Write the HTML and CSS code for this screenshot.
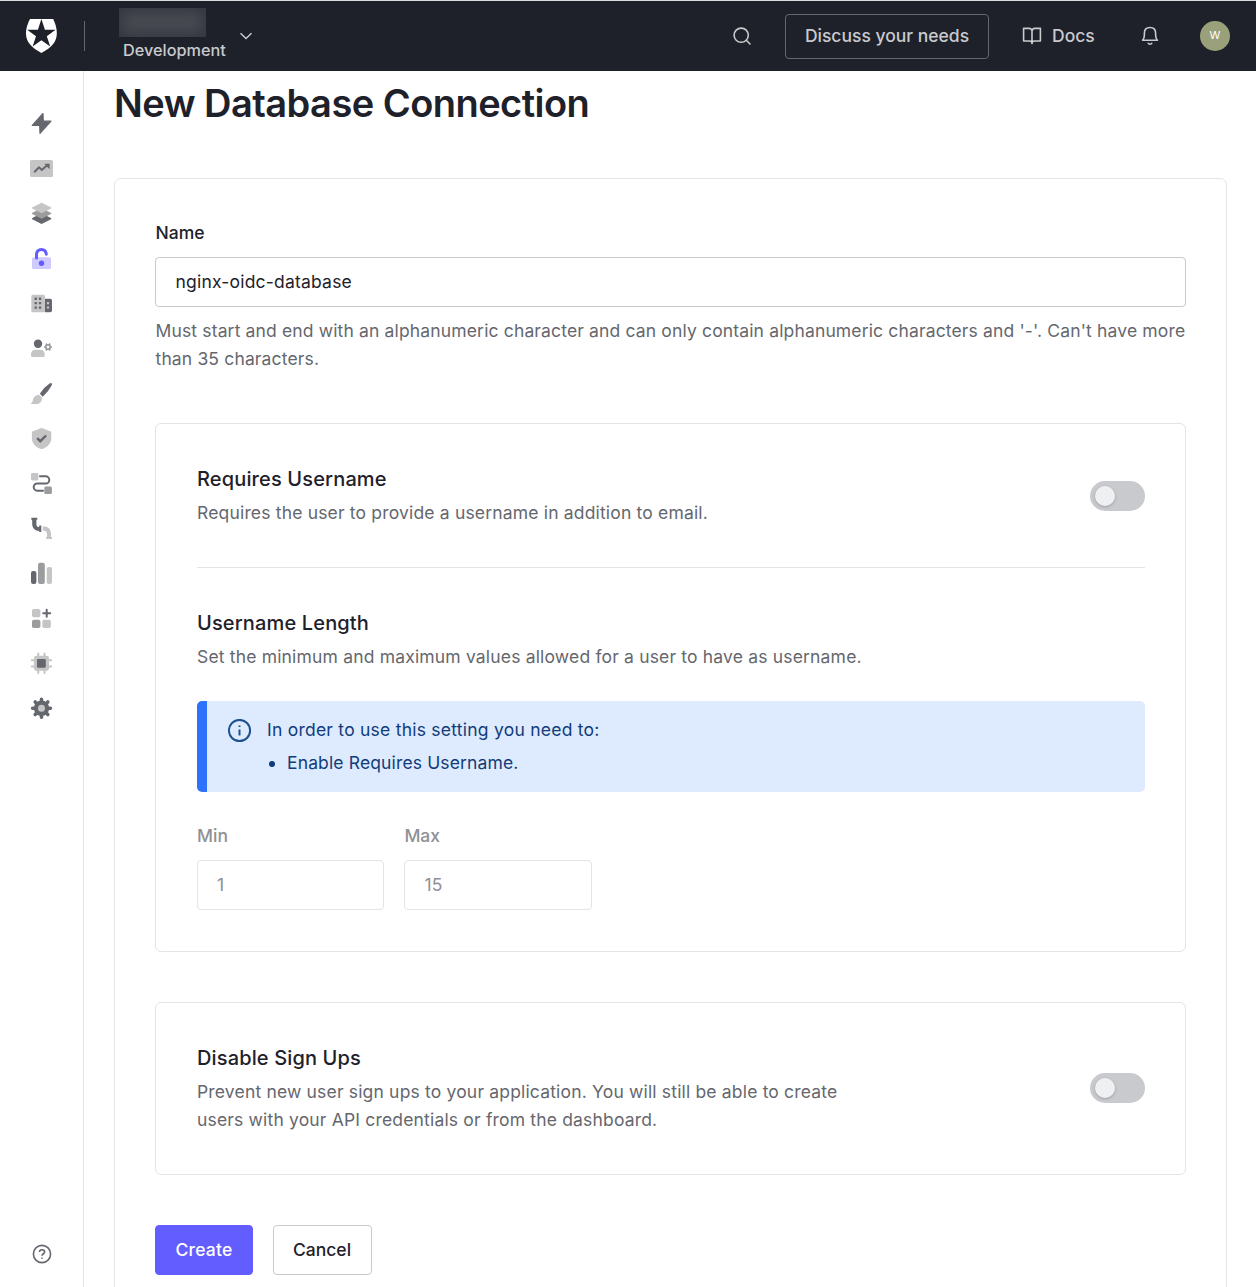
FILE: index.html
```html
<!DOCTYPE html>
<html lang="en">
<head>
<meta charset="utf-8">
<title>New Database Connection</title>
<link rel="stylesheet" href="styles.css">
</head>
<body>
<header class="topbar">
  <svg class="logo" viewBox="0 0 31 34"><path fill="#fff" d="M4 0H27.2C29.5 5 31 10 30.8 15C30.4 23 26 28.2 15.4 34C4.8 28.2.4 23 0 15C-.2 10 1.4 5 4 0Z"/><path fill="#1e212a" d="M15.4 0L18.9 10.7H29.6L20.8 17.2L24.2 27.6L15.4 21.2L6.6 27.6L10 17.2L1.2 10.7H11.9Z"/></svg>
  <span class="topbar-divider"></span>
  <div class="tenant">
    <span class="tenant-name"></span>
    <span class="tenant-env">Development</span>
  </div>
  <svg class="chevron" viewBox="0 0 14 8"><path d="M1.5 1.2L7 6.5L12.5 1.2"/></svg>
  <nav class="actions">
    <svg class="line-icon search" viewBox="0 0 18 18"><circle cx="8.2" cy="8.2" r="7.1"/><path d="M13.3 13.3L17 17"/></svg>
    <a class="discuss">Discuss your needs</a>
    <svg class="line-icon book" viewBox="0 0 20 18"><path d="M10 15.2V4.2C10 2.5 8.8 1.4 7 1.4H1.6V14H7.5C9 14 10 14.6 10 16.6C10 14.6 11 14 12.5 14H18.4V1.4H13C11.2 1.4 10 2.5 10 4.2"/></svg>
    <a class="docs">Docs</a>
    <svg class="line-icon bell" viewBox="0 0 18 20"><path d="M1.6 14.2C3.1 12.6 3.4 11.2 3.4 9V7C3.4 3.6 5.5 1.5 9 1.5S14.6 3.6 14.6 7V9C14.6 11.2 14.9 12.6 16.4 14.2ZM7.2 17.3C7.7 18.6 10.3 18.6 10.8 17.3"/></svg>
    <span class="avatar">W</span>
  </nav>
</header>
<div class="shell">
  <aside class="sidebar">
    <svg class="nav-icon" viewBox="0 0 24 24"><path class="dark join" d="M14 1.5L3.3 13.5H10.7L11 21.3L22 9.2H14.3Z"/></svg>
    <svg class="nav-icon" viewBox="0 0 24 24"><rect class="light" x="1" y="3" width="23" height="17" rx="1.6"/><path class="stroke arrow" d="M5.2 15.2L10 10.3L12.8 13L18.5 8"/><path class="dark" d="M15.2 6.8H20.6V12.2Z"/></svg>
    <svg class="nav-icon" viewBox="0 0 24 24"><path class="dark" d="M3 16.2L12.6 11L22.2 16.2Q22.6 16.8 22 17.2L12.6 22L3.2 17.2Q2.5 16.8 3 16.2Z"/><path class="mid" d="M3 10.9L12.6 6L22.2 10.9Q22.6 11.5 22 11.9L12.6 16.7L3.2 11.9Q2.5 11.5 3 10.9Z"/><path class="light" d="M3 5.5L12.6.7L22.2 5.5Q22.6 6 22 6.5L12.6 11.3L3.2 6.5Q2.5 6 3 5.5Z"/></svg>
    <svg class="nav-icon" viewBox="0 0 24 24"><rect fill="#cfcbff" x="3" y="10.3" width="19" height="11.7" rx="1.6"/><path class="shackle" d="M7.5 11V7.5C7.5 4.4 9.5 2.5 12.4 2.5C15.2 2.5 17 4.3 17.3 7.2"/><circle fill="#635dff" cx="12.5" cy="16.3" r="2.7"/></svg>
    <svg class="nav-icon" viewBox="0 0 24 24"><rect class="light" x="2.3" y="2.7" width="13.7" height="17.6" rx="1.6"/><path class="dark" d="M16 6.7H21.2Q23 6.7 23 8.5V18.6Q23 20.3 21.2 20.3H16Z"/><path class="dark" d="M5.6 5.6h2.3v2.3H5.6zM9.9 5.6h2.3v2.3H9.9zM5.6 10h2.3v2.3H5.6zM9.9 10h2.3v2.3H9.9zM5.6 14.4h2.3v2.3H5.6zM9.9 14.4h2.3v2.3H9.9z"/><path class="light" d="M17.9 10h2.2v2.2h-2.2zM17.9 14.4h2.2v2.2h-2.2z"/></svg>
    <svg class="nav-icon" viewBox="0 0 24 24"><circle class="dark" cx="9" cy="6.7" r="4.2"/><path class="light" d="M2 18.5V17.5Q2 12.7 6.8 12.7H11Q15.7 12.7 15.7 17.5V18.5Q15.7 20 14.2 20H3.5Q2 20 2 18.5Z"/><g class="gear-sm"><circle cx="19" cy="10" r="2.2"/><path d="M21.2 10H23M20.1 11.9L21 13.5M17.9 11.9L17 13.5M16.8 10H15M17.9 8.1L17 6.5M20.1 8.1L21 6.5"/></g></svg>
    <svg class="nav-icon" viewBox="0 0 24 24"><path class="dark" d="M22.7 1.2Q23.5 2 22.5 3.8Q19.5 9.5 13.8 14.8L10.8 11.8Q15 5.3 20.5 1.6Q22 .7 22.7 1.2Z"/><path class="light" d="M10 12.7L13 15.7C13 20 10.5 22 7 22H2.4C1.6 22 1.8 21.4 2.5 21C4.4 19.8 3.3 17.5 5 15.3C6.3 13.5 8 12.8 10 12.7Z"/></svg>
    <svg class="nav-icon" viewBox="0 0 24 24"><path class="light" d="M11.8 1.2Q12.6.8 13.4 1.2L21.3 4.2Q22.3 4.6 22.3 5.6V11C22.3 16.3 18.8 20.3 13.2 22Q12.6 22.2 12 22C6.5 20.3 2.9 16.3 2.9 11V5.6Q2.9 4.6 3.9 4.2Z"/><path class="stroke" d="M8.2 11.2L11.2 14.2L17.1 8.5"/></svg>
    <svg class="nav-icon" viewBox="0 0 24 24"><rect class="light" x="2" y="1" width="7.4" height="7.4" rx="1.3"/><rect class="mid" x="15.3" y="14.6" width="7.6" height="7.4" rx="1.3"/><path class="stroke thin" d="M11 4.3H16.7A3.6 3.6 0 0 1 16.7 11.5H8.3A3.6 3.6 0 0 0 8.3 18.7H14"/></svg>
    <svg class="nav-icon" viewBox="0 0 24 24"><path class="dark" d="M2.3.8H8.3V2.8H7.4V7.2Q7.4 10 10.2 10V8.6H12.3V15H10.2V14C6 13.8 3.2 11 3.2 7V2.8H2.3Z"/><path class="light" d="M13.8 9.3C19 9.3 22 12 22 17V20H23V22H17V20H18V17Q18 13.6 13.8 13.6Z"/></svg>
    <svg class="nav-icon" viewBox="0 0 24 24"><rect class="dark" x="2" y="9" width="5.4" height="13" rx="2"/><rect class="mid" x="9" y=".8" width="6.8" height="21.2" rx="2"/><rect class="light" x="17.7" y="5" width="5.3" height="17" rx="2"/></svg>
    <svg class="nav-icon" viewBox="0 0 24 24"><rect class="light" x="3" y="2" width="8.4" height="8.2" rx="1.8"/><rect class="mid" x="3" y="12.7" width="8.4" height="8.4" rx="1.8"/><rect class="light" x="13.4" y="12.7" width="8.4" height="8.4" rx="1.8"/><path class="stroke thin" d="M17.7 2.8V9.8M14.2 6.3H21.2"/></svg>
    <svg class="nav-icon" viewBox="0 0 24 24"><path class="pins" d="M9.3 1.5V21M15.5 1.5V21M2.8 8.3H22.2M2.8 14.4H22.2"/><rect class="light" x="5" y="3.8" width="15" height="15" rx="2.4"/><rect class="dark" x="8" y="6.9" width="8.8" height="8.8" rx="1.2"/></svg>
    <svg class="nav-icon" viewBox="0 0 24 24"><circle class="dark" cx="12.5" cy="11.3" r="7.7"/><path class="teeth" d="M12.5 2.4V20.2M3.6 11.3H21.4M6.2 5L18.8 17.6M18.8 5L6.2 17.6"/><circle class="light" cx="12.5" cy="11.3" r="3.5"/></svg>
    <svg class="nav-icon help" viewBox="0 0 24 24"><circle cx="13" cy="12" r="8.6"/><path d="M10.4 10C10.5 8.5 11.6 7.7 13 7.7C14.5 7.7 15.6 8.6 15.6 10C15.6 11.7 13 11.8 13 13.7M13 15.6V16.8"/></svg>
  </aside>
  <main class="content">
    <h1>New Database Connection</h1>
    <form class="card">
      <label class="label" for="name">Name</label>
      <input class="field" id="name" type="text" value="nginx-oidc-database">
      <p class="hint">Must start and end with an alphanumeric character and can only contain alphanumeric characters and '-'. Can't have more than 35 characters.</p>
      <section class="panel panel-username">
        <div class="row">
          <div>
            <h2>Requires Username</h2>
            <p>Requires the user to provide a username in addition to email.</p>
          </div>
          <span class="toggle"></span>
        </div>
        <hr>
        <h2>Username Length</h2>
        <p>Set the minimum and maximum values allowed for a user to have as username.</p>
        <div class="notice">
          <svg class="info" viewBox="0 0 24 24"><circle cx="11.5" cy="11.5" r="10.6"/><path d="M11.5 10.5V16.5M11.5 6.5V8"/></svg>
          <div>
            <div class="notice-title">In order to use this setting you need to:</div>
            <ul><li>Enable Requires Username.</li></ul>
          </div>
        </div>
        <div class="range">
          <div><label class="label" for="min">Min</label><input class="field" id="min" type="text" value="1" disabled></div>
          <div><label class="label" for="max">Max</label><input class="field" id="max" type="text" value="15" disabled></div>
        </div>
      </section>
      <section class="panel panel-signups">
        <div class="row">
          <div class="narrow">
            <h2>Disable Sign Ups</h2>
            <p>Prevent new user sign ups to your application. You will still be able to create users with your API credentials or from the dashboard.</p>
          </div>
          <span class="toggle"></span>
        </div>
      </section>
      <div class="buttons">
        <button class="btn primary" type="button">Create</button>
        <button class="btn" type="button">Cancel</button>
      </div>
    </form>
  </main>
</div>
</body>
</html>
```

FILE: styles.css
```css
* { box-sizing: border-box; }
body {
  margin: 0;
  height: 1287px;
  overflow: hidden;
  background: #fff;
  color: #1e212a;
  font: 17.5px/28px Inter, "Liberation Sans", sans-serif;
}
h1, h2, p, ul { margin: 0; font-weight: 500; }

/* Top bar */
.topbar {
  display: flex;
  align-items: center;
  height: 71px;
  padding: 0 26px;
  border-top: 1px solid #d5e0df;
  background: #1e212a;
  color: #c9cace;
}
.logo { width: 31px; height: 34px; }
.topbar-divider { width: 1px; height: 30px; margin-left: 27px; background: #65676e; }
.tenant { display: flex; flex-direction: column; margin-left: 34px; width: 110px; height: 56px; }
.tenant-name { width: 87px; height: 29px; background: #494b53; box-shadow: inset 0 0 14px 4px #34373f; }
.tenant-env { padding-left: 4px; font-size: 16.25px; line-height: 26px; font-weight: 500; }
.chevron { width: 14px; height: 8px; margin-left: 10px; fill: none; stroke: #c9cace; stroke-width: 1.5; }
.actions { display: flex; align-items: center; margin-left: auto; font-weight: 500; }
.line-icon { fill: none; stroke: #c9cace; stroke-width: 1.6; stroke-linecap: round; stroke-linejoin: round; }
.search { width: 18px; height: 18px; }
.discuss {
  width: 204px; height: 45px; margin-left: 34px;
  border: 1px solid #65676e; border-radius: 4px;
  line-height: 42px; text-align: center;
}
.book { width: 20px; height: 18px; margin-left: 33px; }
.docs { width: 44px; margin-left: 10px; white-space: nowrap; }
.bell { width: 18px; height: 20px; margin-left: 45px; }
.avatar {
  width: 30px; height: 30px; margin-left: 41px; border-radius: 50%;
  background: #9aa17a; color: #fff;
  font-size: 11px; font-weight: 400; line-height: 29px; text-align: center;
}

/* Side navigation */
.shell { display: flex; height: 1216px; }
.sidebar {
  display: flex; flex-direction: column; gap: 21px;
  width: 84px; padding: 41px 0 21px 29px;
  border-right: 1px solid #e3e4e6;
}
.nav-icon { width: 24px; height: 24px; flex: none; fill: none; }
.dark { fill: #65676e; }
.mid { fill: #9b9c9e; }
.light { fill: #c5c5c5; }
.join { stroke: #65676e; stroke-width: 1.2; stroke-linejoin: round; }
.stroke { stroke: #65676e; stroke-width: 2.4; }
.stroke.arrow { stroke-width: 2; }
.stroke.thin { stroke-width: 2; stroke-linecap: round; }
.shackle { stroke: #635dff; stroke-width: 3; stroke-linecap: round; }
.gear-sm { stroke: #9b9c9e; stroke-width: 1.7; }
.pins { stroke: #c5c5c5; stroke-width: 2; stroke-linecap: round; }
.teeth { stroke: #65676e; stroke-width: 3.6; stroke-linecap: round; }
.help { margin-top: auto; stroke: #65676e; stroke-width: 1.6; }

/* Form */
.content { flex: 1; padding: 6px 29px 0 30px; }
h1 { font-size: 38px; line-height: 52px; font-weight: 600; letter-spacing: -.54px; }
.card {
  height: 1150px; margin-top: 49px; padding: 40px;
  border: 1px solid #e3e4e6; border-radius: 7px;
}
.label { display: block; height: 28px; margin-bottom: 10px; font-weight: 500; }
.card > .label { padding-left: .5px; }
.field {
  display: block; width: 100%; height: 50px; padding: 0 20px 2px 19.5px;
  border: 1px solid #c9cace; border-radius: 4px;
  background: #fff; color: #1e212a; font: inherit; letter-spacing: .2px;
}
p { color: #65676e; font-weight: 400; letter-spacing: .175px; }
.hint { margin: 10px -5px 0 .5px; letter-spacing: .15px; }
.panel { padding: 41px 40px 40px 41px; border: 1px solid #e3e4e6; border-radius: 6px; }
.panel-username { height: 529px; margin-top: 50px; }
.panel-signups { height: 173px; margin-top: 50px; }
.row { display: flex; align-items: center; justify-content: space-between; }
.narrow { width: 660px; }
h2 { font-size: 20px; line-height: 28px; margin-bottom: 6px; letter-spacing: .14px; }
.toggle {
  display: flex; align-items: center;
  width: 55px; height: 30px; padding-left: 5px;
  border-radius: 15px; background: #c9cace;
}
.panel-signups .toggle { margin-bottom: 2px; }
.toggle::before {
  content: ""; width: 20px; height: 20px; border-radius: 50%;
  background: #eff0f2; box-shadow: 0 1px 3px rgba(30, 33, 42, .25);
}
hr { height: 1px; margin: 40px 0 41px; border: 0; background: #e3e4e6; }
.notice {
  display: flex; height: 91px; margin-top: 30px; padding: 15px 20px;
  border-left: 10px solid #2e71fa; border-radius: 5px;
  background: #deeafe; color: #113c7a; letter-spacing: .24px;
}
.info { width: 24px; height: 24px; margin: 3px 15px 0 1px; fill: none; stroke: #1f5090; stroke-width: 2; }
.notice ul { margin-top: 5px; padding-left: 20px; font-weight: 400; letter-spacing: .14px; }
.range { display: flex; gap: 20px; margin-top: 30px; color: #8f9095; }
.range > div { width: 187.4px; }
.range .field { border-color: #e3e4e6; color: #8f9095; padding-left: 19px; }
.buttons { display: flex; gap: 20px; margin-top: 50px; }
.btn {
  width: 99px; height: 50px; padding: 0 1px 0 0;
  border: 1px solid #c9cace; border-radius: 4px;
  background: #fff; color: #1e212a; font: inherit; font-weight: 500;
}
.primary { width: 98px; padding: 0; border-color: #635dff; background: #635dff; color: #fff; letter-spacing: .2px; }
```
